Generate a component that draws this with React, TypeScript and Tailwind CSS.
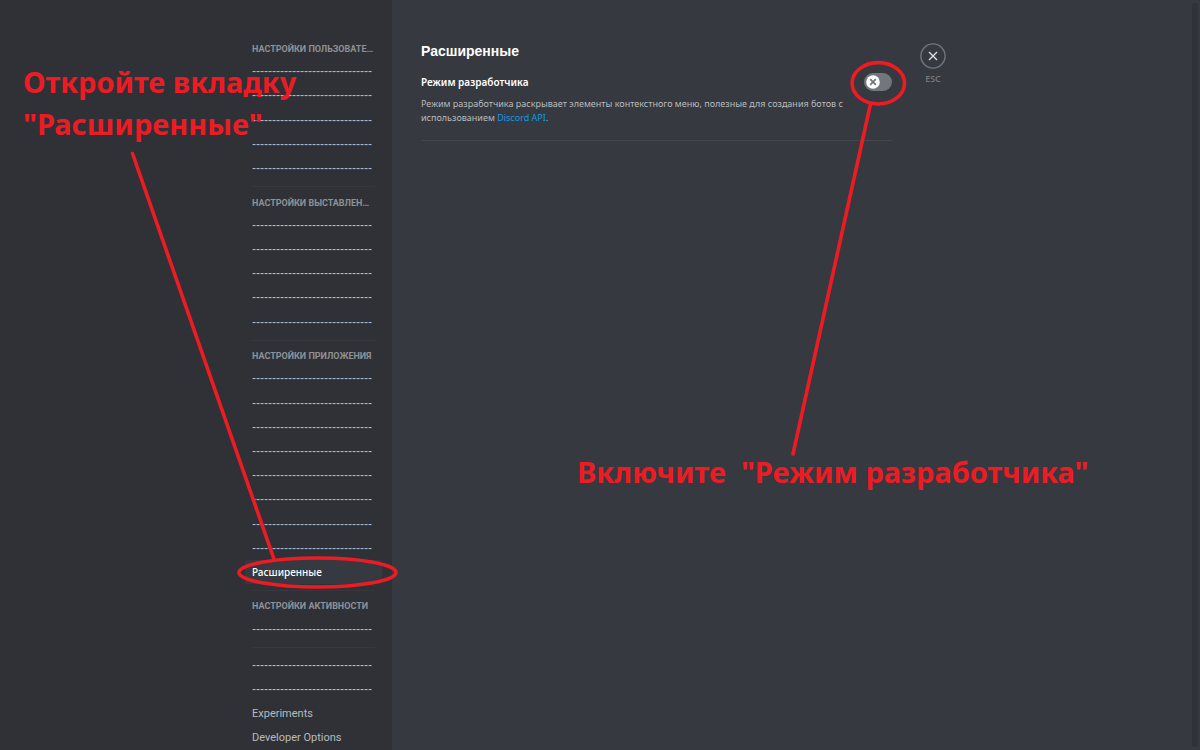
import React, { useState } from 'react';

const DASHES = '-'.repeat(30);

type Section = {
  title?: string;
  items: string[];
};

const sections: Section[] = [
  { title: 'Настройки пользователя', items: Array(5).fill(DASHES) },
  { title: 'Настройки выставления счетов', items: Array(5).fill(DASHES) },
  { title: 'Настройки приложения', items: [...Array(8).fill(DASHES), 'Расширенные'] },
  { title: 'Настройки активности', items: [DASHES] },
  { items: [DASHES, DASHES, 'Experiments', 'Developer Options'] },
];

function Sidebar() {
  return (
    <aside className="flex h-full min-w-0 flex-[392_1_0%] justify-end bg-[#2f3136]">
      <nav className="mr-[10px] flex h-full w-[137px] flex-col justify-between pt-[39px]">
        {sections.map((section, i) => (
          <React.Fragment key={i}>
            {i > 0 && <hr className="mx-[7px] mt-[6px] mb-[5px] border-[#36383e]" />}
            {section.title && (
              <h2 className="mx-[7px] h-5 truncate font-['Roboto',sans-serif] text-[9px] leading-5 font-bold text-[#8e9297] uppercase">
                {section.title}
              </h2>
            )}
            {section.items.map((item, j) => (
              <a
                key={j}
                href="#"
                className={
                  item === 'Расширенные'
                    ? 'block h-6 rounded-[3px] bg-[#36393f] px-[7px] text-[10px] leading-6 font-medium whitespace-nowrap text-white'
                    : item === DASHES
                      ? "block h-6 px-[7px] font-['Liberation_Sans',sans-serif] text-[12px] leading-6 whitespace-nowrap text-[#b9bbbe]"
                      : "block h-6 px-[7px] font-['Roboto',sans-serif] text-[11px] leading-6 whitespace-nowrap text-[#b9bbbe]"
                }
              >
                {item}
              </a>
            ))}
          </React.Fragment>
        ))}
      </nav>
    </aside>
  );
}

function DeveloperModeSwitch() {
  const [on, setOn] = useState(false);

  return (
    <button
      id="developer-mode"
      type="button"
      role="switch"
      aria-checked={on}
      onClick={() => setOn(!on)}
      className={
        on
          ? 'flex h-[18px] w-7 items-center justify-end rounded-full bg-[#43b581] px-[2px]'
          : 'flex h-[18px] w-7 items-center rounded-full bg-[#72767d] px-[2px]'
      }
    >
      <svg viewBox="0 0 14 14" className="h-[14px] w-[14px]">
        <circle cx="7" cy="7" r="6.8" fill="#fff" />
        <path d="M4.2 4.2l5.6 5.6M9.8 4.2l-5.6 5.6" stroke="#72767d" strokeWidth="1.8" />
      </svg>
    </button>
  );
}

function Content() {
  return (
    <main className="flex h-full min-w-0 flex-[808_1_0%] items-start bg-[#36393f]">
      <section className="ml-[29px] w-[471px] pt-[41px]">
        <h1 className="font-['Liberation_Sans',sans-serif] text-[14px] leading-5 font-bold text-white">
          Расширенные
        </h1>
        <div className="mt-3 flex items-start justify-between">
          <label htmlFor="developer-mode" className="text-[10px] leading-[18px] font-semibold text-white">
            Режим разработчика
          </label>
          <DeveloperModeSwitch />
        </div>
        <p className="mt-[6px] max-w-[424px] text-[9px] leading-[14px] text-[#b9bbbe]">
          Режим разработчика раскрывает элементы контекстного меню, полезные для создания ботов с
          использованием{' '}
          <a href="#" className="text-[#0f9be0]">
            Discord API
          </a>
          .
        </p>
        <hr className="mt-[15px] border-[#42454b]" />
      </section>
      <div className="ml-[28px] flex flex-col items-center pt-[43px]">
        <button type="button" aria-label="ESC">
          <svg viewBox="0 0 26 26" className="h-[26px] w-[26px]" fill="none">
            <circle cx="13" cy="13" r="12.1" stroke="#72767d" strokeWidth="1.4" />
            <path d="M9 9l8 8M17 9l-8 8" stroke="#dcddde" strokeWidth="1.4" />
          </svg>
        </button>
        <span className="mt-[3px] text-[9px] leading-[14px] font-semibold text-[#72767d]">ESC</span>
      </div>
      <div className="ml-auto h-full py-[3px] pr-[2px]">
        <div className="h-full w-[6px] rounded-full bg-[#2e3338]" />
      </div>
    </main>
  );
}

function Annotations() {
  return (
    <div className="pointer-events-none absolute inset-0 text-[29px] font-bold text-[#ed1c24]">
      <svg
        viewBox="0 0 1200 750"
        className="absolute top-0 left-0 h-[750px] w-[1200px]"
        fill="none"
        stroke="currentColor"
        strokeWidth="3.6"
        strokeLinecap="round"
      >
        <path d="M132.5 153.5L274 559" />
        <ellipse cx="317.5" cy="572.5" rx="78.5" ry="14.5" />
        <path d="M870.5 104L793 454" />
        <ellipse cx="878.3" cy="83.3" rx="26.2" ry="20.7" />
      </svg>
      <p className="absolute top-[61px] left-[23px] leading-[42px] whitespace-nowrap">
        Откройте вкладку
        <br />
        "Расширенные"
      </p>
      <p className="absolute top-[451px] left-[577px] leading-[42px] whitespace-pre">
        {'Включите  "Режим разработчика"'}
      </p>
    </div>
  );
}

export default function App() {
  return (
    <div className="relative flex h-screen overflow-hidden bg-[#36393f] font-['Noto_Sans',sans-serif]">
      <Sidebar />
      <Content />
      <Annotations />
    </div>
  );
}
